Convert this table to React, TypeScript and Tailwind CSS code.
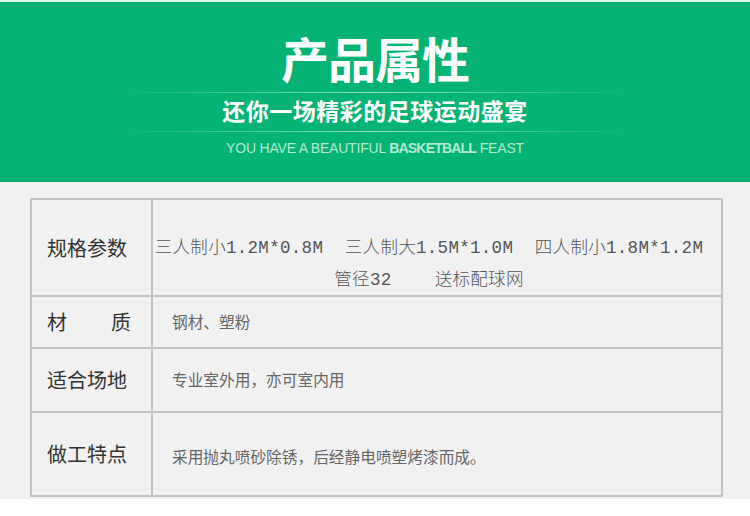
export default function App() {
  const rows = [
    { label: '适合场地', text: '专业室外用，亦可室内用', h: 'h-[64px]' },
    { label: '做工特点', text: '采用抛丸喷砂除锈，后经静电喷塑烤漆而成。', h: 'h-[82px]', pt: 'pt-[6px]' },
  ]

  return (
    <div className="w-[750px] h-[516px] overflow-hidden bg-white font-['Noto_Sans_CJK_SC',sans-serif]">
      {/* Header */}
      <div className="h-[2px] bg-[#e6f6f3]" />
      <div className="h-[180px] bg-[#05b474] flex flex-col items-center">
        <h1 className="mt-[26px] h-[58px] text-[48px] leading-[58px] font-bold text-white tracking-[-1px]">产品属性</h1>
        <div className="mt-[6px] w-[520px] h-px bg-gradient-to-r from-transparent via-[#8fe0bd] to-transparent" />
        <p className="mt-[1px] h-[32px] text-[23px] leading-[32px] font-bold text-white tracking-[0.5px]">还你一场精彩的足球运动盛宴</p>
        <div className="mt-[5px] w-[520px] h-px bg-gradient-to-r from-transparent via-[#8fe0bd] to-transparent" />
        <p className="mt-[7px] text-[14px] leading-[18px] text-[#b4e8d2] font-['Liberation_Sans',sans-serif] tracking-[-0.2px]">
          YOU HAVE A BEAUTIFUL <span className="font-bold tracking-[-0.8px]">BASKETBALL</span> FEAST
        </p>
      </div>

      {/* Table */}
      <div className="h-[317px] bg-[#f1f1f1] pt-[16px] pl-[30px]">
        <div className="w-[693px] border-2 border-[#c2c2c2]">
          <div className="flex h-[97px] border-b-2 border-[#c2c2c2]">
            <div className="w-[121px] shrink-0 border-r-2 border-[#c2c2c2] flex items-center pl-[15px] text-[20px] text-[#333]">规格参数</div>
            <div className="flex-1 flex flex-col items-center pt-[32px] pr-[16px] text-[17.5px] leading-[32px] text-[#555] font-['Liberation_Mono','Noto_Sans_CJK_SC',monospace] font-light tracking-[0.3px] whitespace-pre">
              <span>三人制小1.2M*0.8M  三人制大1.5M*1.0M  四人制小1.8M*1.2M</span>
              <span>管径32    送标配球网</span>
            </div>
          </div>
          <div className="flex h-[52px] border-b-2 border-[#c2c2c2]">
            <div className="w-[121px] shrink-0 border-r-2 border-[#c2c2c2] flex items-center justify-between pl-[15px] pr-[20px] text-[20px] text-[#333]">
              <span>材</span>
              <span>质</span>
            </div>
            <div className="flex-1 flex items-center pl-[19px] text-[15.7px] text-[#666]">钢材、塑粉</div>
          </div>
          {rows.map((r, i) => (
            <div key={r.label} className={`flex ${r.h} ${i === 0 ? 'border-b-2 border-[#c2c2c2]' : ''}`}>
              <div className="w-[121px] shrink-0 border-r-2 border-[#c2c2c2] flex items-center pl-[15px] text-[20px] text-[#333]">{r.label}</div>
              <div className={`flex-1 flex items-center pl-[19px] text-[15.7px] text-[#666] ${r.pt ?? ''}`}>{r.text}</div>
            </div>
          ))}
        </div>
      </div>
    </div>
  )
}
